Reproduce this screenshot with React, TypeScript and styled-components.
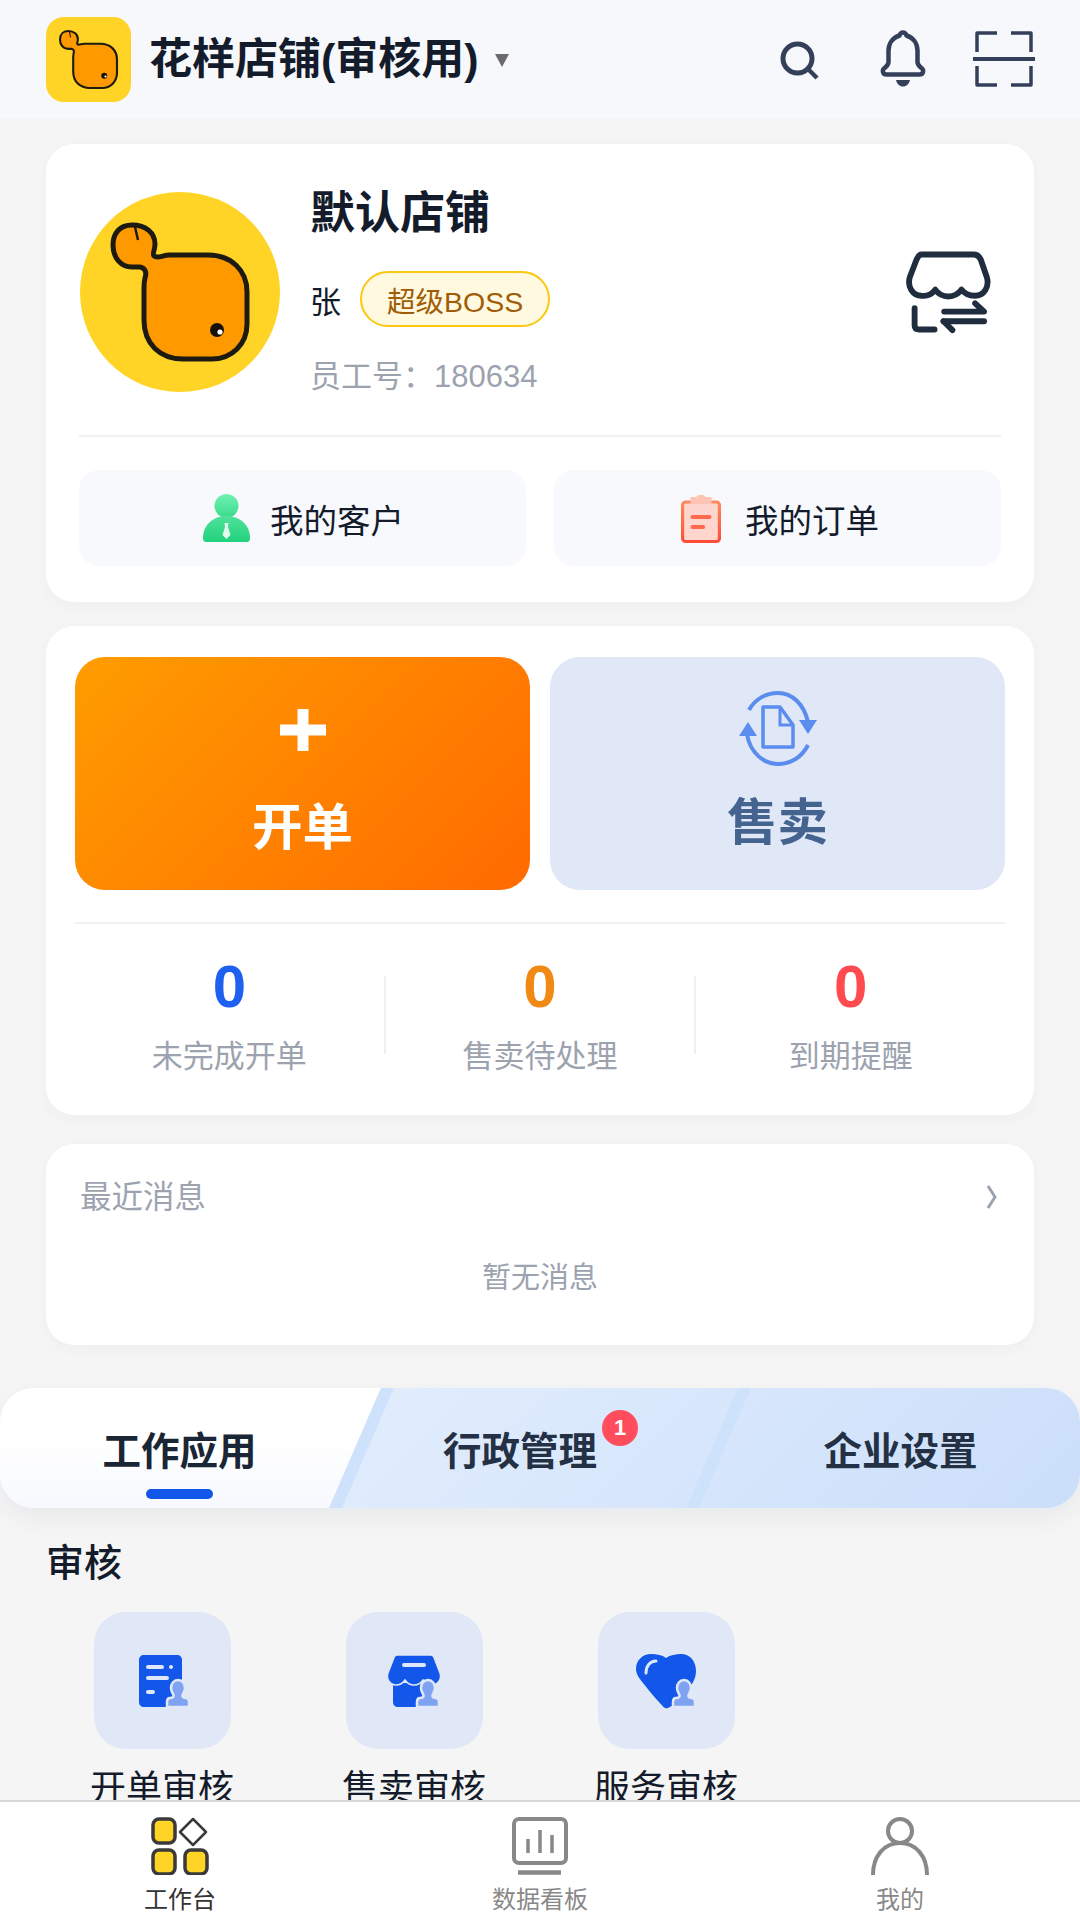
import React from "react";
import styled, { createGlobalStyle } from "styled-components";

const GlobalStyle = createGlobalStyle`
    html, body {
        margin: 0;
        padding: 0;
        background: #f5f5f5;
    }
    * {
        box-sizing: border-box;
    }
    body {
        font-family: "Liberation Sans", "Noto Sans CJK SC", sans-serif;
    }
`;

const Page = styled.div`
    width: 1080px;
    height: 1920px;
    display: flex;
    flex-direction: column;
    overflow: hidden;
    background: #f5f5f5;
`;

const Content = styled.div`
    flex: 1;
    min-height: 0;
    overflow: hidden;
`;

const Header = styled.header`
    height: 118px;
    display: flex;
    align-items: center;
    padding: 0 45px 0 46px;
    background: #f7f8fc;
`;

const LogoBox = styled.div<{ $size: number; $round: string }>`
    width: ${(p) => p.$size}px;
    height: ${(p) => p.$size}px;
    flex: none;
    background: #ffd426;
    border-radius: ${(p) => p.$round};
    overflow: hidden;

    svg {
        display: block;
        width: 100%;
        height: 100%;
    }
`;

const ShopName = styled.div`
    margin-left: 18px;
    font-size: 43px;
    line-height: 50px;
    font-weight: 700;
    color: #141b2b;
    white-space: nowrap;
`;

const Caret = styled.div`
    margin-left: 16px;
    margin-top: 2px;
    width: 0;
    height: 0;
    border-left: 7px solid transparent;
    border-right: 7px solid transparent;
    border-top: 13px solid #6b6b6b;
`;

const HeaderIcons = styled.div`
    margin-left: auto;
    display: flex;
    align-items: center;
`;

const HeaderIcon = styled.svg<{ $gap: number }>`
    display: block;
    margin-left: ${(p) => p.$gap}px;
    fill: none;
    stroke: #34405a;
`;

const Card = styled.section`
    margin: 0 46px;
    background: #fff;
    border-radius: 28px;
    box-shadow: 0 4px 16px rgba(20, 30, 60, 0.03);
`;

const ProfileCard = styled(Card)`
    margin-top: 26px;
    padding: 43px 33px 36px;
`;

const ProfileRow = styled.div`
    height: 248px;
    display: flex;
    align-items: flex-start;
`;

const Avatar = styled(LogoBox)`
    margin: 5px 0 0 1px;
`;

const ProfileInfo = styled.div`
    margin: 2px 0 0 30px;
    display: flex;
    flex-direction: column;
`;

const StoreName = styled.div`
    font-size: 45px;
    line-height: 50px;
    font-weight: 700;
    color: #141b2b;
`;

const OwnerRow = styled.div`
    margin-top: 32px;
    height: 56px;
    display: flex;
    align-items: center;
    gap: 19px;
`;

const OwnerName = styled.span`
    font-size: 31px;
    color: #141b2b;
`;

const RoleBadge = styled.span`
    height: 56px;
    padding: 0 25px;
    display: flex;
    align-items: center;
    border: 2px solid #fbc70f;
    border-radius: 28px;
    background: #fff9e0;
    color: #a15c07;
    font-size: 28.5px;
`;

const EmployeeNo = styled.div`
    margin-top: 32px;
    font-size: 31px;
    line-height: 36px;
    color: #9ca3af;
`;

const SwitchIcon = styled.svg`
    margin: 62px 7px 0 auto;
    fill: none;
    stroke: #1f2d3f;
    stroke-width: 17;
    stroke-linecap: round;
    stroke-linejoin: round;
`;

const Divider = styled.div`
    height: 2px;
    background: #f0f1f4;
`;

const ShortcutRow = styled.div`
    margin-top: 33px;
    display: grid;
    grid-template-columns: 1fr 1fr;
    gap: 28px;
`;

const Shortcut = styled.div<{ $gap: number; $shift?: number }>`
    height: 96px;
    display: flex;
    align-items: center;
    justify-content: center;
    gap: ${(p) => p.$gap}px;
    padding-left: ${(p) => p.$shift || 0}px;
    background: #f8f9fd;
    border-radius: 20px;
    font-size: 33.5px;
    color: #141b2b;
`;

const ActionCard = styled(Card)`
    margin-top: 24px;
    padding: 31px 29px 0;
`;

const ActionRow = styled.div`
    display: grid;
    grid-template-columns: 1fr 1fr;
    gap: 20px;
    margin-bottom: 32px;
`;

const ActionButton = styled.div<{ $primary?: boolean }>`
    height: 233px;
    display: flex;
    flex-direction: column;
    align-items: center;
    border-radius: 30px;
    font-size: 50.5px;
    line-height: 56px;
    font-weight: 700;
    color: ${(p) => (p.$primary ? "#fff" : "#44648f")};
    background: ${(p) => (p.$primary ? "linear-gradient(135deg, #ff9d00, #ff6a00)" : "#e0e7f6")};
    padding-top: ${(p) => (p.$primary ? "52px" : "34px")};

    svg {
        display: block;
        margin-bottom: ${(p) => (p.$primary ? "49px" : "28px")};
    }
`;

const StatsRow = styled.div`
    display: flex;
    align-items: center;
    padding: 28px 0 38px;
`;

const Stat = styled.div`
    flex: 1;
    display: flex;
    flex-direction: column;
    align-items: center;
`;

const StatValue = styled.div<{ $color: string }>`
    font-size: 60px;
    line-height: 70px;
    font-weight: 700;
    color: ${(p) => p.$color};
`;

const StatLabel = styled.div`
    margin-top: 15px;
    font-size: 31px;
    line-height: 40px;
    color: #9ca3af;
`;

const StatSep = styled.div`
    width: 2px;
    height: 78px;
    background: #eff0f3;
`;

const MessageCard = styled(Card)`
    margin-top: 29px;
    padding: 33px 34px 49px;
`;

const MessageHead = styled.div`
    display: flex;
    align-items: center;
    justify-content: space-between;
    font-size: 31.5px;
    line-height: 40px;
    color: #9ca3af;

    svg {
        display: block;
        margin-right: 3px;
    }
`;

const EmptyText = styled.div`
    margin-top: 43px;
    text-align: center;
    font-size: 29px;
    line-height: 36px;
    color: #9ca3af;
`;

const TabBar = styled.div`
    position: relative;
    margin-top: 43px;
    height: 120px;
    display: flex;
    overflow: hidden;
    border-radius: 34px;
    background: linear-gradient(135deg, #ebf4fe, #cbdefa);
`;

const TabShadow = styled.div`
    border-radius: 34px;
    box-shadow: 0 10px 24px rgba(30, 50, 90, 0.06);
`;

const Tab = styled.div<{ $width: number; $start?: number; $inset?: number; $active?: boolean; $stripe?: number }>`
    position: relative;
    width: ${(p) => p.$width}px;
    padding-left: ${(p) => p.$start || 0}px;
    padding-right: ${(p) => p.$inset || 0}px;
    display: flex;
    align-items: center;
    justify-content: center;
    font-size: 38.5px;
    font-weight: 700;
    color: ${(p) => (p.$active ? "#1a2535" : "#243044")};

    &::before {
        content: "";
        display: ${(p) => (p.$active ? "block" : "none")};
        position: absolute;
        top: 0;
        bottom: 0;
        left: -60px;
        right: 0;
        background: linear-gradient(180deg, #fff 40%, #f7f9fe);
        transform: skewX(-23.4deg);
    }

    &::after {
        content: "";
        display: ${(p) => (p.$stripe ? "block" : "none")};
        position: absolute;
        top: 0;
        bottom: 0;
        left: ${(p) => p.$stripe}px;
        width: 13px;
        background: #cfe2fb;
        transform: skewX(-23.4deg);
    }
`;

const TabLabel = styled.span`
    position: relative;
    z-index: 1;
    white-space: nowrap;
`;

const TabMark = styled.div`
    position: absolute;
    z-index: 1;
    left: 146px;
    bottom: 9px;
    width: 67px;
    height: 10px;
    border-radius: 5px;
    background: #1257ea;
`;

const TabBadge = styled.span`
    position: absolute;
    left: calc(100% + 5px);
    top: -10px;
    width: 36px;
    height: 36px;
    border-radius: 50%;
    display: flex;
    align-items: center;
    justify-content: center;
    background: #ff4d5e;
    color: #fff;
    font-size: 22px;
    font-weight: 700;
`;

const SectionTitle = styled.h2`
    margin: 33px 0 0 46px;
    font-size: 38px;
    line-height: 44px;
    font-weight: 500;
    color: #141b2b;
`;

const AppGrid = styled.div`
    margin: 27px 0 0 36px;
    display: grid;
    grid-template-columns: repeat(3, 252px);
`;

const AppItem = styled.div`
    display: flex;
    flex-direction: column;
    align-items: center;
    font-size: 36px;
    line-height: 44px;
    color: #141b2b;
`;

const AppTile = styled.div`
    width: 137px;
    height: 137px;
    margin-bottom: 18px;
    display: flex;
    align-items: center;
    justify-content: center;
    border-radius: 32px;
    background: #e0e7f6;
`;

const BottomBar = styled.nav`
    height: 120px;
    flex: none;
    display: grid;
    grid-template-columns: repeat(3, 1fr);
    padding-top: 15px;
    background: #fff;
    border-top: 2px solid #d8d8d8;
`;

const NavItem = styled.div<{ $active?: boolean }>`
    display: flex;
    flex-direction: column;
    align-items: center;
    font-size: 24px;
    line-height: 30px;
    color: ${(p) => (p.$active ? "#333" : "#888")};

    svg {
        display: block;
        margin-bottom: 10px;
    }
`;

function WhaleLogo() {
    return (
        <svg viewBox="0 0 200 200">
            <path
                d="M52 33C40 33 33 41 33 53C33 66 41 75 52 75L60 75C65 76 67 80 65 86C64 90 64 92 64 96L64 128C64 152 80 167 103 167L132 167C152 167 167 152 167 132L167 100C167 78 151 63 128 63L90 63C82 63 78 67 74 64C72 62 75 58 75 52C75 41 66 33 52 33Z"
                fill="#ff9900"
                stroke="#1d1a12"
                strokeWidth="5"
                strokeLinejoin="round"
            />
            <path d="M55 35L58 48" stroke="#1d1a12" strokeWidth="2.5" fill="none" />
            <circle cx="137" cy="138" r="7" fill="#14110a" />
            <circle cx="140" cy="140" r="2.6" fill="#fff" />
        </svg>
    );
}

function SearchIcon() {
    return (
        <HeaderIcon $gap={0} width="44" height="44" viewBox="0 0 44 44" strokeWidth="5">
            <circle cx="20.500" cy="21.500" r="14.500" />
            <path d="M32 33L40 41" strokeWidth="4.500" />
        </HeaderIcon>
    );
}

function BellIcon() {
    return (
        <HeaderIcon $gap={58} width="48" height="58" viewBox="0 0 48 58" strokeWidth="4.500">
            <path
                d="M24 2.500C26 2.500 27 4 27.500 5.500C34 7.500 38.500 13 38.500 21V32C38.500 35 40 36 42.500 38C45.500 40.500 44 44.500 40.500 44.500H7.500C4 44.500 2.500 40.500 5.500 38C8 36 9.500 35 9.500 32V21C9.500 13 14 7.500 20.500 5.500C21 4 22 2.500 24 2.500Z"
                strokeLinejoin="round"
            />
            <path d="M17 50H31C30 54 27.500 56.500 24 56.500C20.500 56.500 18 54 17 50Z" fill="#34405a" stroke="none" />
        </HeaderIcon>
    );
}

function ScanIcon() {
    return (
        <HeaderIcon $gap={46} width="62" height="58" viewBox="0 0 62 58" strokeWidth="3.500" strokeLinejoin="round">
            <path d="M24 3H4V22" />
            <path d="M38 3H58V22" />
            <path d="M4 36V55H24" />
            <path d="M58 36V55H38" />
            <path d="M0 29H62" strokeWidth="4" />
        </HeaderIcon>
    );
}

function ShopSwitchIcon() {
    return (
        <SwitchIcon width="90" height="86" viewBox="140 90 260 250">
            <path d="M190 106H342C352 106 358 112 362 120L380 172C388 200 372 226 345 226C330 226 315 220 306 208C296 222 282 228 268 228C252 228 240 222 230 208C220 222 205 228 190 226C165 226 148 200 156 172L176 120C180 112 184 106 190 106Z" />
            <path d="M170 262V312Q170 324 182 324H228" />
            <path d="M256 272H372L346 248" />
            <path d="M254 300H372" />
            <path d="M254 300L280 326" />
        </SwitchIcon>
    );
}

function CustomerIcon() {
    return (
        <svg width="47" height="48" viewBox="0 0 47 48">
            <defs>
                <linearGradient id="custHead" x1="0" y1="0" x2="0" y2="1">
                    <stop offset="0" stopColor="#6ff3b2" />
                    <stop offset="1" stopColor="#3bd98c" />
                </linearGradient>
                <linearGradient id="custBody" x1="0" y1="0" x2="0" y2="1">
                    <stop offset="0" stopColor="#4fe29a" />
                    <stop offset="1" stopColor="#22d17e" />
                </linearGradient>
            </defs>
            <circle cx="23.500" cy="12" r="12" fill="url(#custHead)" />
            <path d="M0 44C0 31 10 22 23.500 22C37 22 47 31 47 44C47 46.500 46 48 44 48H3C1 48 0 46.500 0 44Z" fill="url(#custBody)" />
            <path d="M21.500 29H25.500L25 33L27.500 41L23.500 45L19.500 41L22 33Z" fill="#e3fbef" />
        </svg>
    );
}

function OrderIcon() {
    return (
        <svg width="40" height="49" viewBox="0 0 38 49" preserveAspectRatio="none">
            <defs>
                <linearGradient id="orderEdge" x1="0" y1="0" x2="0" y2="1">
                    <stop offset="0" stopColor="#ff8a5c" />
                    <stop offset="1" stopColor="#ff4d38" />
                </linearGradient>
            </defs>
            <rect x="1.500" y="8" width="35" height="39.500" rx="3" fill="#ffd6cd" stroke="url(#orderEdge)" strokeWidth="3" />
            <path d="M9 3H14.500C16 0 22 0 23.500 3H29V10H9Z" fill="#ffc4b6" />
            <rect x="9" y="21" width="20" height="4" rx="2" fill="#ff6a4d" />
            <rect x="9" y="31" width="14" height="4" rx="2" fill="#ff6a4d" />
        </svg>
    );
}

function PlusIcon() {
    return (
        <svg width="46" height="42" viewBox="0 0 46 42">
            <rect x="0" y="15.500" width="46" height="11" fill="#fff" />
            <rect x="17.500" y="0" width="11" height="42" fill="#fff" />
        </svg>
    );
}

function DocSwapIcon() {
    return (
        <svg width="78" height="76" viewBox="0 0 78 76" fill="none" stroke="#5b8def">
            <path d="M10 19C16 8 27 2 39 2C53 2 65 13 69 31" strokeWidth="4" />
            <path d="M69 54C63 66 52 73 39 73C25 73 11 62 8 43" strokeWidth="4" />
            <path d="M60 29H78L69 43Z" fill="#5b8def" stroke="none" />
            <path d="M0 45H18L9 31Z" fill="#5b8def" stroke="none" />
            <path d="M24 16H41L54 34V56H24Z" strokeWidth="3.500" strokeLinejoin="round" />
            <path d="M41 16V34H54" strokeWidth="3" />
        </svg>
    );
}

function Stamp() {
    return (
        <path
            d="M42 27C46.500 27 49 31 49 35C49 38 47.500 40 46.500 42C46 44 47.500 45 50 45C52.500 45 53 47 53 49V54H31V49C31 47 32 45 34 45C36.500 45 38 44 37.500 42C36.500 40 35 38 35 35C35 31 37.500 27 42 27Z"
            fill="#7fa3f2"
            stroke="#e0e7f6"
            strokeWidth="2.500"
        />
    );
}

function BillAuditIcon() {
    return (
        <svg width="56" height="56" viewBox="-2 0 56 56">
            <path d="M8 2H41C44 2 46 4 46 7V54H8C5 54 3 52 3 49V7C3 4 5 2 8 2Z" fill="#1257ea" />
            <rect x="10" y="12" width="18" height="4" rx="2" fill="#dfe8fb" />
            <rect x="33" y="12" width="4" height="4" rx="2" fill="#dfe8fb" />
            <rect x="10" y="23" width="23" height="4" rx="2" fill="#dfe8fb" />
            <rect x="10" y="37" width="9" height="4" rx="2" fill="#dfe8fb" />
            <Stamp />
        </svg>
    );
}

function StoreAuditIcon() {
    return (
        <svg width="56" height="56" viewBox="0 0 56 56">
            <path d="M7 30H47V54H12C9 54 7 52 7 49Z" fill="#1257ea" />
            <path d="M11 2H45C46.500 2 47.500 3 48 4.500L54 20C56 26 52 32 46 32C42 32 39 30 37 27C35 30 32 32 28 32C24 32 21 30 19 27C17 30 14 32 10 32C4 32 0 26 2 20L8 4.500C8.500 3 9.500 2 11 2Z" fill="#1257ea" stroke="#e0e7f6" strokeWidth="1.500" />
            <rect x="16" y="10" width="24" height="4" rx="2" fill="#dfe8fb" />
            <Stamp />
        </svg>
    );
}

function HeartAuditIcon() {
    return (
        <svg width="60" height="56" viewBox="0 0 60 56">
            <path d="M30 5C34 2 40 1 45 1C54 1 60 8 60 18C60 27 55 33 48 41C42 48 37 53 32 55C31 55.500 29 55.500 27.500 54C22 48 14 39 7 30C2 24 0 20 0 16C0 7 7 1 15 1C21 1 26 2 30 5Z" fill="#1257ea" />
            <path d="M10 20C10 13 14 8 20 8" fill="none" stroke="#dfe8fb" strokeWidth="3" strokeLinecap="round" />
            <g transform="translate(6 0)">
                <Stamp />
            </g>
        </svg>
    );
}

function WorkbenchIcon() {
    return (
        <svg width="60" height="58" viewBox="0 0 60 58" fill="#ffd426" stroke="#3a3a3a" strokeWidth="3.500">
            <rect x="3" y="2" width="22" height="24" rx="6" />
            <path d="M43 2L56 15L43 28L30 15Z" fill="none" strokeWidth="2.500" strokeLinejoin="round" />
            <rect x="3" y="33" width="22" height="24" rx="6" />
            <rect x="35" y="33" width="22" height="24" rx="6" />
        </svg>
    );
}

function BoardIcon() {
    return (
        <svg width="58" height="58" viewBox="0 0 58 58" fill="none" stroke="#888">
            <rect x="3" y="2" width="52" height="44" rx="5" strokeWidth="4" />
            <path d="M17 22V36M29 13V36M41 18V36" strokeWidth="3.500" />
            <path d="M7 55.500H50" strokeWidth="4.500" />
        </svg>
    );
}

function MineIcon() {
    return (
        <svg width="58" height="58" viewBox="0 0 58 58" fill="none" stroke="#888" strokeWidth="4">
            <circle cx="29" cy="14" r="12" />
            <path d="M2 58C2 39 13 26 29 26C45 26 56 39 56 58" />
        </svg>
    );
}

export default function App() {
    return (
        <Page>
            <GlobalStyle />
            <Content>
                <Header>
                    <LogoBox $size={85} $round="18px">
                        <WhaleLogo />
                    </LogoBox>
                    <ShopName>花样店铺(审核用)</ShopName>
                    <Caret />
                    <HeaderIcons>
                        <SearchIcon />
                        <BellIcon />
                        <ScanIcon />
                    </HeaderIcons>
                </Header>

                <ProfileCard>
                    <ProfileRow>
                        <Avatar $size={200} $round="50%">
                            <WhaleLogo />
                        </Avatar>
                        <ProfileInfo>
                            <StoreName>默认店铺</StoreName>
                            <OwnerRow>
                                <OwnerName>张</OwnerName>
                                <RoleBadge>超级BOSS</RoleBadge>
                            </OwnerRow>
                            <EmployeeNo>员工号：180634</EmployeeNo>
                        </ProfileInfo>
                        <ShopSwitchIcon />
                    </ProfileRow>
                    <Divider />
                    <ShortcutRow>
                        <Shortcut $gap={20} $shift={2}>
                            <CustomerIcon />
                            我的客户
                        </Shortcut>
                        <Shortcut $gap={24} $shift={5}>
                            <OrderIcon />
                            我的订单
                        </Shortcut>
                    </ShortcutRow>
                </ProfileCard>

                <ActionCard>
                    <ActionRow>
                        <ActionButton $primary>
                            <PlusIcon />
                            开单
                        </ActionButton>
                        <ActionButton>
                            <DocSwapIcon />
                            售卖
                        </ActionButton>
                    </ActionRow>
                    <Divider />
                    <StatsRow>
                        <Stat>
                            <StatValue $color="#1e60f0">0</StatValue>
                            <StatLabel>未完成开单</StatLabel>
                        </Stat>
                        <StatSep />
                        <Stat>
                            <StatValue $color="#f08a14">0</StatValue>
                            <StatLabel>售卖待处理</StatLabel>
                        </Stat>
                        <StatSep />
                        <Stat>
                            <StatValue $color="#ff4a4f">0</StatValue>
                            <StatLabel>到期提醒</StatLabel>
                        </Stat>
                    </StatsRow>
                </ActionCard>

                <MessageCard>
                    <MessageHead>
                        最近消息
                        <svg width="11" height="24" viewBox="0 0 11 24" fill="none" stroke="#9ca3af" strokeWidth="3">
                            <path d="M2 1L9 12L2 23" />
                        </svg>
                    </MessageHead>
                    <EmptyText>暂无消息</EmptyText>
                </MessageCard>

                <TabShadow>
                    <TabBar>
                        <Tab $width={355} $start={4} $active $stripe={355}>
                            <TabLabel>工作应用</TabLabel>
                            <TabMark />
                        </Tab>
                        <Tab $width={370} $inset={40} $stripe={357}>
                            <TabLabel>
                                行政管理
                                <TabBadge>1</TabBadge>
                            </TabLabel>
                        </Tab>
                        <Tab $width={351}>
                            <TabLabel>企业设置</TabLabel>
                        </Tab>
                    </TabBar>
                </TabShadow>

                <SectionTitle>审核</SectionTitle>
                <AppGrid>
                    <AppItem>
                        <AppTile>
                            <BillAuditIcon />
                        </AppTile>
                        开单审核
                    </AppItem>
                    <AppItem>
                        <AppTile>
                            <StoreAuditIcon />
                        </AppTile>
                        售卖审核
                    </AppItem>
                    <AppItem>
                        <AppTile>
                            <HeartAuditIcon />
                        </AppTile>
                        服务审核
                    </AppItem>
                </AppGrid>
            </Content>

            <BottomBar>
                <NavItem $active>
                    <WorkbenchIcon />
                    工作台
                </NavItem>
                <NavItem>
                    <BoardIcon />
                    数据看板
                </NavItem>
                <NavItem>
                    <MineIcon />
                    我的
                </NavItem>
            </BottomBar>
        </Page>
    );
}
